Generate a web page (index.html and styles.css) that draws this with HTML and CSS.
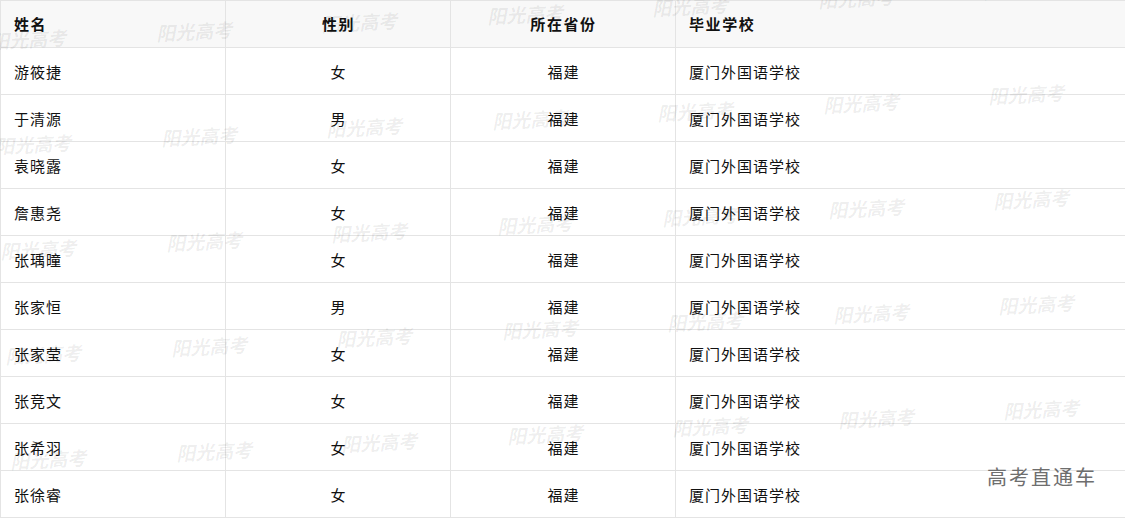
FILE: index.html
```html
<!DOCTYPE html>
<html lang="zh-CN">
<head>
<meta charset="utf-8">
<title>名单</title>
<link rel="stylesheet" href="styles.css">
</head>
<body>
<div class="page">
  <table class="list">
    <colgroup>
      <col class="c-name"><col class="c-sex"><col class="c-prov"><col class="c-school">
    </colgroup>
    <thead>
      <tr><th class="left">姓名</th><th>性别</th><th>所在省份</th><th class="left">毕业学校</th></tr>
    </thead>
    <tbody>
      <tr><td class="left">游筱捷</td><td>女</td><td>福建</td><td class="left">厦门外国语学校</td></tr>
      <tr><td class="left">于清源</td><td>男</td><td>福建</td><td class="left">厦门外国语学校</td></tr>
      <tr><td class="left">袁晓露</td><td>女</td><td>福建</td><td class="left">厦门外国语学校</td></tr>
      <tr><td class="left">詹惠尧</td><td>女</td><td>福建</td><td class="left">厦门外国语学校</td></tr>
      <tr><td class="left">张瑀曈</td><td>女</td><td>福建</td><td class="left">厦门外国语学校</td></tr>
      <tr><td class="left">张家恒</td><td>男</td><td>福建</td><td class="left">厦门外国语学校</td></tr>
      <tr><td class="left">张家莹</td><td>女</td><td>福建</td><td class="left">厦门外国语学校</td></tr>
      <tr><td class="left">张竞文</td><td>女</td><td>福建</td><td class="left">厦门外国语学校</td></tr>
      <tr><td class="left">张希羽</td><td>女</td><td>福建</td><td class="left">厦门外国语学校</td></tr>
      <tr><td class="left">张徐睿</td><td>女</td><td>福建</td><td class="left">厦门外国语学校</td></tr>
    </tbody>
  </table>
  <div class="watermarks" id="wm" aria-hidden="true"></div>
  <div class="brand">高考直通车</div>
</div>
<script src="script.js"></script>
</body>
</html>
```

FILE: styles.css
```css
html, body {
  margin: 0;
  padding: 0;
  background: #ffffff;
}
body {
  font-family: "Noto Sans CJK SC", "Liberation Sans", sans-serif;
  font-size: 15px;
  color: #111;
}
.page {
  position: relative;
  width: 1125px;
  height: 518px;
  overflow: hidden;
}
.list {
  width: 1125px;
  border-collapse: collapse;
  table-layout: fixed;
}
.c-name, .c-sex, .c-prov { width: 225px; }
.c-school { width: 450px; }
.list th, .list td {
  border: 1px solid #e4e4e4;
  height: 46px;
  padding: 0 12px 0 13px;
  text-align: center;
  vertical-align: middle;
  line-height: 20px;
  letter-spacing: 1px;
}
.list td {
  height: 44px;
  padding-top: 2px;
}
.list th {
  background: #f8f8f8;
  font-weight: 700;
  color: #111;
  letter-spacing: 1.6px;
}
.list .left { text-align: left; }
.watermarks {
  position: absolute;
  inset: 0;
  pointer-events: none;
}
.wm {
  position: absolute;
  font-family: "Noto Sans CJK SC", "Liberation Serif", serif;
  font-size: 19px;
  font-weight: 700;
  font-style: italic;
  line-height: 22px;
  color: rgba(0, 0, 0, 0.07);
  white-space: nowrap;
  transform: rotate(-3deg);
}
.brand {
  position: absolute;
  left: 987px;
  top: 464px;
  font-size: 20px;
  line-height: 26px;
  color: #6e6e6e;
  letter-spacing: 2px;
}
```

FILE: script.js
```js
(function () {
  var box = document.getElementById('wm');
  for (var r = -1; r < 5; r++) {
    for (var c = 0; c < 7; c++) {
      var x = -10 + 5 * r + 165.5 * c;
      var y = 28 + 105 * r - 8.3 * c;
      if (y < -25 || y > 520) continue;
      var s = document.createElement('span');
      s.className = 'wm';
      s.textContent = '阳光高考';
      s.style.left = x.toFixed(1) + 'px';
      s.style.top = y.toFixed(1) + 'px';
      box.appendChild(s);
    }
  }
})();
```
